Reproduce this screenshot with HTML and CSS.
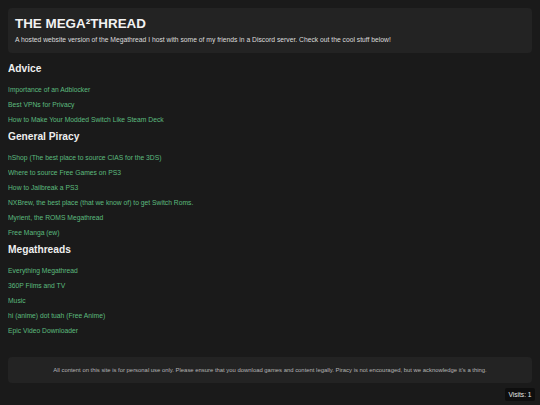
FILE: index.html
```html
<!DOCTYPE html>
<html lang="en">
<head>
<meta charset="utf-8">
<title>THE MEGA²THREAD</title>
<link rel="stylesheet" href="styles.css">
</head>
<body>
<header class="hero">
  <h1 class="hero-title">THE MEGA²THREAD</h1>
  <p class="hero-sub">A hosted website version of the Megathread I host with some of my friends in a Discord server. Check out the cool stuff below!</p>
</header>
<main class="content">
  <section class="group">
    <h2 class="group-title">Advice</h2>
    <a class="link" href="#">Importance of an Adblocker</a>
    <a class="link" href="#">Best VPNs for Privacy</a>
    <a class="link" href="#">How to Make Your Modded Switch Like Steam Deck</a>
  </section>
  <section class="group">
    <h2 class="group-title">General Piracy</h2>
    <a class="link" href="#">hShop (The best place to source CIAS for the 3DS)</a>
    <a class="link" href="#">Where to source Free Games on PS3</a>
    <a class="link" href="#">How to Jailbreak a PS3</a>
    <a class="link" href="#">NXBrew, the best place (that we know of) to get Switch Roms.</a>
    <a class="link" href="#">Myrient, the ROMS Megathread</a>
    <a class="link" href="#">Free Manga (ew)</a>
  </section>
  <section class="group">
    <h2 class="group-title">Megathreads</h2>
    <a class="link" href="#">Everything Megathread</a>
    <a class="link" href="#">360P Films and TV</a>
    <a class="link" href="#">Music</a>
    <a class="link" href="#">hi (anime) dot tuah (Free Anime)</a>
    <a class="link" href="#">Epic Video Downloader</a>
  </section>
</main>
<footer class="footer">
  <p class="footer-text">All content on this site is for personal use only. Please ensure that you download games and content legally. Piracy is not encouraged, but we acknowledge it's a thing.</p>
</footer>
<div class="visits">Visits: 1</div>
</body>
</html>
```
FILE: styles.css
```css
html, body {
  background: #1a1a1a;
}
body {
  margin: 8px;
  font-family: "Liberation Sans", Arial, sans-serif;
  color: #e6e6e6;
}
.hero {
  background: #232323;
  border-radius: 4px;
  padding: 8px 7px 8px;
  height: 45px;
  box-sizing: border-box;
}
.hero-title {
  margin: 0 0 3px;
  font-size: 13.4px;
  line-height: 16px;
  font-weight: bold;
  color: #f2f2f2;
}
.hero-sub {
  margin: 0;
  font-size: 6.75px;
  line-height: 9px;
  color: #dcdcdc;
}
.content {
  padding-top: 5.5px;
}
.group {
  display: flex;
  flex-direction: column;
  align-items: flex-start;
}
.group-title {
  margin: 3.5px 0 5.5px;
  font-size: 10.2px;
  line-height: 14px;
  font-weight: bold;
  color: #eeeeee;
}
.link {
  display: block;
  font-size: 6.75px;
  line-height: 15px;
  color: #5cbb7e;
  text-decoration: none;
}
.footer {
  margin-top: 19px;
  background: #232323;
  border-radius: 4px;
  height: 26px;
  display: flex;
  align-items: center;
  justify-content: center;
}
.footer-text {
  margin: 0;
  font-size: 5.9px;
  color: #b4b4b4;
  text-align: center;
}
.visits {
  position: fixed;
  right: 5px;
  bottom: 4px;
  background: #0e0e0e;
  color: #e8e8e8;
  font-size: 6.6px;
  line-height: 13px;
  padding: 0 3.5px;
  border-radius: 2px;
}
```
